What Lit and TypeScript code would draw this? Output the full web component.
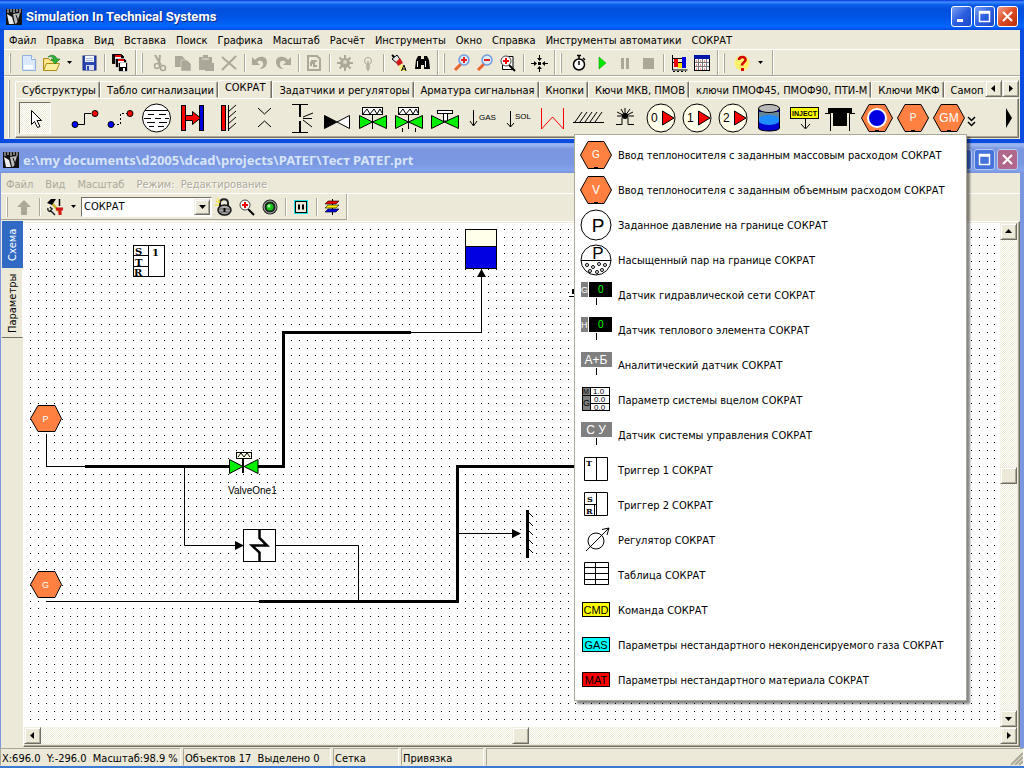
import { LitElement, html, svg, css, type SVGTemplateResult } from "lit";
import { customElement, state } from "lit/decorators.js";
import { classMap } from "lit/directives/class-map.js";

type Icon = SVGTemplateResult;

const draw = (icon: Icon, size: number) => html`
  <svg width=${size} height=${size} viewBox="0 0 ${size} ${size}" aria-hidden="true">${icon}</svg>
`;

/* ---------- 20px toolbar glyphs ---------- */
const floppy = svg`<rect x="4" y="3" width="13" height="14" fill="#2a48b8" stroke="#16277c"/><rect x="6" y="3" width="9" height="6" fill="#f4f7ff"/><path d="M7 5.500h7M7 7.500h7" stroke="#a8b4d8"/><rect x="7" y="12" width="8" height="5" fill="#d8dcec"/><rect x="8" y="13" width="2" height="4" fill="#2a48b8"/>`;
const lens = (x: number, y: number, mark: Icon) => svg`<path d="M${x - 3} ${y + 4}L3 17" stroke="#e8642c" stroke-width="3"/><circle cx=${x} cy=${y} r="5" fill="#dcecff" stroke="#6f9be0" stroke-width="1.500"/>${mark}`;
const redLens = svg`<path d="M11 12l6 6" stroke="#000" stroke-width="2"/><circle cx="8" cy="8" r="5" fill="#fff" stroke="#444"/><path d="M8 5v6M5 8h6" stroke="#e00" stroke-width="2"/>`;
const g = "#aca899";

const tb: Record<string, Icon> = {
  page: svg`<path d="M4.500 2.500h9l4 4v11h-13z" fill="#dbe9fb" stroke="#8fb0dc"/><path d="M13.500 2.500v4h4" fill="#fff" stroke="#8fb0dc"/><path d="M6 14h9" stroke="#f8fbff" stroke-width="4"/>`,
  open: svg`<path d="M2.500 17.500v-12h5l2 2h6v4" fill="#fbe48a" stroke="#b08a18"/><path d="M2.500 17.500l3-7h13l-3 7z" fill="#fff0a0" stroke="#b08a18"/><path d="M7 4c3-3 8-2 9 2h3l-5 5-4-5h3c-1-2-3-3-6-2z" fill="#2fae35" stroke="#187a20" stroke-width=".6"/>`,
  save: floppy,
  copies: svg`<path d="M2.500 1.500h9l2 2v7h-11z" fill="#000" stroke="#000"/><path d="M5 3h6v3H5z" fill="#fff"/><path d="M5 2h6v2H5z" fill="#e00"/><path d="M5.500 5.500h9l2 2v7h-11z" stroke="#fff" stroke-width=".6"/><path d="M8 7h6v3H8z" fill="#fff"/><path d="M8 6h6v2H8z" fill="#e00"/><path d="M8.500 9.500h9v9h-8l-1-1z" stroke="#fff" stroke-width=".6"/><path d="M10 10h6v4h-6zM13 15h2v3h-2z" fill="#fff"/>`,
  cut: svg`<path d="M5 2l6 10M10 2l-1 9" stroke=${g} stroke-width="2" fill="none"/><circle cx="7" cy="13" r="2.500" fill="none" stroke=${g} stroke-width="1.500"/><circle cx="13" cy="15" r="2.500" fill="none" stroke=${g} stroke-width="1.500"/>`,
  copy: svg`<path d="M2 3h7l3 3v8H2z" fill=${g}/><path d="M8 7h6l4 4v7H8z" fill=${g} stroke="#ece9d8" stroke-width=".5"/>`,
  paste: svg`<path d="M3 4h13v13H3zM7 2h5v3H7z" fill=${g}/><path d="M6 6h7" stroke="#ece9d8"/><path d="M9 10h9v8H9z" fill=${g}/>`,
  del: svg`<path d="M3 4l14 12M3 17L17 3" stroke=${g} stroke-width="2"/>`,
  undo: svg`<path d="M2 4v8h8l-3-3c4-3 7 0 6 3s-3 3-3 4c5 0 7-4 7-7 0-6-8-7-12-2z" fill=${g}/>`,
  redo: svg`<path d="M18 4v8h-8l3-3c-4-3-7 0-6 3s3 3 3 4c-5 0-7-4-7-7 0-6 8-7 12-2z" fill=${g}/>`,
  doc: svg`<path d="M4 3h9l3 3v11H4z" fill="none" stroke=${g} stroke-width="2"/><path d="M7 8h6M7 13v-3h3v3h3" stroke=${g} stroke-width="2" fill="none"/>`,
  gear: svg`<circle cx="10" cy="10" r="5" fill=${g}/><path d="M10 2v16M2 10h16M4.500 4.500l11 11M15.500 4.500l-11 11" stroke=${g} stroke-width="2"/><circle cx="10" cy="9" r="2" fill="#dcd8c8"/>`,
  bulb: svg`<circle cx="10" cy="8" r="3.500" fill="none" stroke=${g}/><path d="M10 8v4M8 13h4M8 15h4M9 17h2" stroke=${g} stroke-width="1.500"/>`,
  torch: svg`<path d="M3 2l5 5" stroke="#000" stroke-width="2"/><path d="M3 6l5-4 4 6-3 3z" fill="#e8e8e8" stroke="#000"/><path d="M7 9l4-4 3 5-5 3z" fill="#d01818"/><path d="M10 13l4-2 4 7h-7z" fill="#fff27a"/><path d="M12.500 18l2.500-6 2 6M13 16h4" fill="none" stroke="#000"/>`,
  binocular: svg`<path d="M4 7l2-4h3v3h3V3h3l2 4 1 9h-6v-4h-3v4H3z" fill="#000"/><path d="M5.500 8v6M13.500 8v6" stroke="#fff"/>`,
  zoomIn: lens(12, 7, svg`<path d="M12 4v6M9 7h6" stroke="#e02020" stroke-width="2"/>`),
  zoomOut: lens(12, 7, svg`<path d="M9 7h6" stroke="#e02020" stroke-width="2"/>`),
  zoomFit: svg`<path d="M8 3.500h7v13H4.500V12" fill="#fff" stroke="#000"/>${redLens}`,
  cross: svg`<path d="M10.500 2v4M10.500 14v5M2 10.500h4M14 10.500h5" stroke="#000"/><path d="M8 5h5l-2.500 3zM8 16h5l-2.500-3zM5 8v5l3-2.500zM16 8v5l-3-2.500z" fill="#000"/><rect x="9" y="9" width="3" height="3"/>`,
  watch: svg`<circle cx="10" cy="11.500" r="5.500" fill="#fff" stroke="#000" stroke-width="1.500"/><path d="M8 2.500h4M10 3v3M14 5l2 2M10 8v4" stroke="#000" stroke-width="1.500"/>`,
  play: svg`<path d="M7 4l7 6-7 6z" fill="#00e800" stroke="#009000" stroke-width=".5"/>`,
  pause: svg`<path d="M7.500 5v11M12.500 5v11" stroke=${g} stroke-width="3"/>`,
  stop: svg`<rect x="5" y="5" width="11" height="11" fill=${g}/>`,
  chart: svg`<path d="M3.500 2v15h15M4 5.500h13M4 9.500h13" stroke="#000" fill="none"/><rect x="5" y="6" width="4" height="8" fill="#e00"/><rect x="9" y="10" width="4" height="5" fill="#fd0"/><rect x="13" y="4" width="4" height="11" fill="#00d"/><path d="M4 18.500h13" stroke="#000" stroke-dasharray="2 2"/>`,
  calendar: svg`<rect x="2.500" y="3.500" width="15" height="14" fill="#fff" stroke="#000"/><rect x="2" y="2" width="16" height="4" fill="#0018a8"/><path d="M3 9.500h14M3 13.500h14M6.500 6v11M10.500 6v11M14.500 6v11" stroke="#777"/><path d="M4 8h12M4 12h12M4 16h12" stroke="#d22" stroke-dasharray="1 3"/>`,
  help: svg`<circle cx="10" cy="10" r="7.500" fill="#fff06a"/><path d="M7 7c0-4 7-4 6.500 0 0 2-3.500 3-3.500 5.500" fill="none" stroke="#d40000" stroke-width="2.500"/><rect x="9" y="15" width="3" height="3" fill="#d40000"/>`,
  up: svg`<path d="M10 3l7 7h-4v8H7v-8H3z" fill=${g}/>`,
  tools: svg`<path d="M6 5l10 12" stroke="#c8b020" stroke-width="2.500"/><path d="M2 6l4-4h5L7 8z" fill="#000"/><path d="M14.500 2v7" stroke="#000" stroke-width="1.500"/><path d="M11 12h7M15 12v6" stroke="#d01818" stroke-width="3"/><path d="M3 11c-1 3 2 4 3 3l4 4M5 10l2 2-2 2" fill="none" stroke="#222" stroke-width="1.500"/>`,
  lock: svg`<path d="M6 9V6c0-5 8-5 8 0v3" fill="none" stroke="#222" stroke-width="2"/><path d="M2 4l4 2M1 8h4M3 1l3 4" stroke="#f4e400"/><ellipse cx="10.500" cy="13" rx="6.500" ry="5" fill="#aaa" stroke="#111" stroke-width="1.500"/><path d="M5 12h11M5 15h11" stroke="#555"/><path d="M10.500 11v4" stroke="#000" stroke-width="2"/>`,
  zoomRed: redLens,
  target: svg`<circle cx="10" cy="10" r="7.500" fill="#222"/><circle cx="10" cy="10" r="6" fill="none" stroke="#b4c4b4"/><circle cx="10" cy="10" r="3.500" fill="#12c812"/><circle cx="9" cy="9" r="1.500" fill="#b6ffb6"/>`,
  pauseBox: svg`<rect x="3" y="3" width="14" height="14" fill="#20dfe0"/><rect x="4.500" y="4.500" width="11" height="11" fill="#ece9d8" stroke="#000"/><path d="M8 7.500v5M12 7.500v5" stroke="#000" stroke-width="2"/>`,
  layers: svg`<path d="M10.500 2v16" stroke="#000"/><path d="M6 4h11l-3 3H3z" fill="#e00" stroke="#000" stroke-width=".6"/><path d="M6 8h11l-3 3H3z" fill="#fe0" stroke="#000" stroke-width=".6"/><path d="M6 12h11l-3 3H3z" fill="#00d" stroke="#000" stroke-width=".6"/>`,
};

/* ---------- 32px palette glyphs ---------- */
const orange = "#ff8040";
const hexagon = (label: Icon) => svg`<path d="M.5 16L8 2.500h16L31.500 16 24 29.500H8z" fill=${orange} stroke="#000"/><rect x="14" y="28" width="4" height="2"/>${label}`;
const hexText = (t: string, size = 10) => hexagon(svg`<text class="hx" x="16" y=${size > 11 ? 20 : 19} font-size=${size}>${t}</text>`);
const valve = svg`<path d="M2.500 13.500v13L15.500 20zM29.500 13.500v13L15.500 20z" fill="#00f000" stroke="#000"/>`;
const actuator = svg`<rect x="5.500" y="5.500" width="20" height="7" fill="#fff" stroke="#000"/><path d="M6 12l4-5 3 5 4-5 3 5 3-5 2 4" fill="none" stroke="#000"/><path d="M15.500 12v15" stroke="#000"/>`;
const pump = (n: string) => svg`<circle cx="16" cy="16" r="14" fill="#ffffea" stroke="#000"/><path d="M17.500 9v14L29 16z" fill="#f00" stroke="#000"/><text x="6" y="20" font-size="12">${n}</text>`;
const downLabel = (t: string) => svg`<path d="M8.500 8v15M5 19l3.500 5 3.500-5" fill="none" stroke="#000"/><text x="14" y="18" font-size="8">${t}</text>`;

const pal: Array<[string, Icon]> = [
  ["Связь", svg`<path d="M8 22.500h7.500v-11H22" fill="none" stroke="#000"/><circle cx="6" cy="22.500" r="3" fill="#00f" stroke="#000"/><circle cx="26" cy="11.500" r="3" fill="#f00" stroke="#000"/>`],
  ["Пунктирная связь", svg`<path d="M8 22.500h7.500v-11H22" fill="none" stroke="#000" stroke-dasharray="2 2"/><circle cx="6" cy="22.500" r="3" fill="#00f" stroke="#000"/><circle cx="25" cy="11.500" r="3" fill="#f00" stroke="#000"/>`],
  ["Камера", svg`<circle cx="15.500" cy="16" r="14" fill="#fff" stroke="#000"/><path d="M4 8.500h23M7 12.500h6M18 12.500h7M3 16.500h7M14 16.500h6M24 16.500h4M6 20.500h8M18 20.500h8M8 24.500h5M17 24.500h6" stroke="#000"/>`],
  ["Теплообмен", svg`<rect x="4.500" y="3.500" width="4" height="25" fill="#f00" stroke="#000"/><rect x="22.500" y="3.500" width="4" height="25" fill="#00d" stroke="#000"/><path d="M8.500 13.500h7v-4l8 6.500-8 6.500v-4h-7z" fill="#f00" stroke="#000"/>`],
  ["Стенка", svg`<rect x="8.500" y="3.500" width="4" height="25" fill="#f00" stroke="#000"/><path d="M15.500 3v26M15 10l8-7M15 16l8-7M15 22l8-7M15 28l8-7" fill="none" stroke="#000"/>`],
  ["Сужение", svg`<path d="M9 6l6.500 6L22 6M9 25l6.500-6 6.500 6" fill="none" stroke="#000"/>`],
  ["Истечение", svg`<path d="M7 2.500h16M7 30.500h16M15.500 2v13M15.500 19v12" fill="none" stroke="#000"/><path d="M14.500 3v12M14.500 19v12" stroke="#000"/><path d="M18 15l10-4M18 16.500h9M18 18l9 7" stroke="#000"/>`],
  ["Обратный клапан", svg`<path d="M3.500 13.500v13L16 20z" stroke="#000"/><path d="M28.500 13.500v13L16 20z" fill="#fff" stroke="#000"/>`],
  ["Задвижка", svg`${valve}${actuator}`],
  ["Регулирующий клапан", svg`${valve}${actuator}<path d="M9.500 26v4M22.500 26v4" stroke="#000"/>`],
  ["Клапан", svg`${valve}<rect x="8.500" y="8.500" width="15" height="3" fill="#fff" stroke="#000"/><path d="M14.500 12v7h4v-7" fill="#fff" stroke="#000"/>`],
  ["Подвод газа", downLabel("GAS")],
  ["Подвод раствора", svg`<path d="M9.500 9v16M6 21l3.500 4 3.500-4" fill="none" stroke="#000"/><text x="14" y="17" font-size="8">SOL</text>`],
  ["Пружина", svg`<path d="M4.500 6v21l11-12 11 12V6" fill="none" stroke="#f00"/>`],
  ["Опора", svg`<path d="M0 20.500h31M2 20l7-10M7 20l7-10M12 20l7-10M17 20l7-10M22 20l7-10" stroke="#000"/>`],
  ["Разрыв", svg`<path d="M7 22.500h6v-7M25 22.500h-6v-7M16 14L8 10M16 14l-4-7M16 14V6M16 14l5-7M16 14l8-4M16 14h9M16 14H8" fill="none" stroke="#000"/><circle cx="16" cy="14" r="3"/>`],
  ["Насос 0", pump("0")],
  ["Насос 1", pump("1")],
  ["Насос 2", pump("2")],
  ["Бак", svg`<path d="M5.500 6v20c0 4 21 4 21 0V6" fill="#0000d0" stroke="#000"/><path d="M6 10h20v8H6z" fill="#66879a"/><path d="M6 16c4-4 16-4 20 0v4c-4 4-16 4-20 0z" fill="#1e8cff"/><ellipse cx="16" cy="6.500" rx="10.500" ry="4" fill="#b8b8b8" stroke="#000"/>`],
  ["Инжекция", svg`<rect x="1.500" y="5.500" width="28" height="11" fill="#ff0" stroke="#000"/><text x="15.500" y="14" text-anchor="middle" font-size="7" font-weight="700">INJECT</text><path d="M16.500 17v9M12 22l4.500 5 4.500-5" fill="none" stroke="#000"/>`],
  ["Крышка", svg`<path d="M3 6h24v5H3zM8 11h14v13H8z"/><path d="M0 11.500h5.500V29M30 11.500h-5.500V29" fill="none" stroke="#000"/>`],
  ["Реактор", hexagon(svg`<circle cx="16" cy="16" r="9" fill="#0000e0" stroke="#fff" stroke-width="2"/>`)],
  ["Давление", hexText("P")],
  ["Расход смеси", hexText("GM", 12)],
];

const sensor = (a: string) => svg`<rect x="1" y="3" width="7" height="15" fill="#808080"/><rect x="9" y="3" width="23" height="15"/><text x="1" y="14" font-size="9" fill="#fff">${a}</text><text x="18" y="14" font-size="10" fill="#0f0">0</text><path d="M16.500 19v7" stroke="#000"/>`;
const greyTag = (t: string) => svg`<rect x="1" y="3" width="31" height="15" fill="#808080"/><text x="16" y="15" text-anchor="middle" font-size="12" fill="#fff">${t}</text><path d="M16.500 19v7" stroke="#000"/>`;
const tag = (t: string, color: string) => svg`<rect x="2.500" y="8.500" width="27" height="14" fill=${color} stroke="#000"/><text x="16" y="20" text-anchor="middle" font-size="11">${t}</text>`;

const popup: Array<[Icon, string]> = [
  [hexText("G"), "Ввод теплоносителя с заданным массовым расходом СОКРАТ"],
  [hexText("V", 12), "Ввод теплоносителя с заданным объемным расходом СОКРАТ"],
  [svg`<circle cx="16" cy="16" r="15" fill="#fff" stroke="#000"/><text x="18" y="23" text-anchor="middle" font-size="19">P</text>`, "Заданное давление на границе СОКРАТ"],
  [svg`<circle cx="16" cy="16" r="15" fill="#fff" stroke="#000"/><path d="M1 16.500h30" stroke="#000"/><text x="18" y="15" text-anchor="middle" font-size="17">P</text><g fill="none" stroke="#000"><circle cx="7" cy="21" r="1.500"/><circle cx="13" cy="23" r="1.500"/><circle cx="19" cy="20" r="1.500"/><circle cx="25" cy="21" r="1.500"/><circle cx="10" cy="27" r="1.500"/><circle cx="17" cy="28" r="1.500"/><circle cx="22" cy="26" r="1.500"/></g>`, "Насыщенный пар на границе СОКРАТ"],
  [sensor("G"), "Датчик гидравлической сети СОКРАТ"],
  [sensor("H"), "Датчик теплового элемента СОКРАТ"],
  [greyTag("А+Б"), "Аналитический датчик СОКРАТ"],
  [svg`<rect x="2.500" y="3.500" width="27" height="23" fill="#fff" stroke="#000"/><path d="M3 4h7v22H3z" fill="#808080"/><path d="M10.500 4v22M3 11.500h26M11 19.500h18" stroke="#000"/><text x="3" y="10" font-size="7">М</text><text x="3" y="22" font-size="9">G</text><text x="13" y="10" font-size="8">1.0</text><text x="14" y="18" font-size="8">0.0</text><text x="14" y="26" font-size="8">0.0</text>`, "Параметр системы вцелом СОКРАТ"],
  [greyTag("С У"), "Датчик системы управления СОКРАТ"],
  [svg`<path d="M4.500 3.500h23v23h-23zM16.500 3v24" fill="#fff" stroke="#000"/><text class="serif" x="6" y="12" font-size="8">T</text>`, "Триггер 1 СОКРАТ"],
  [svg`<path d="M4.500 3.500h23v23h-23zM16.500 3v24M4 15.500h12M14.500 15v12" fill="#fff" stroke="#000"/><text class="serif" x="7" y="13" font-size="8">S</text><text class="serif" x="6" y="25" font-size="8">R</text>`, "Триггер 2 СОКРАТ"],
  [svg`<circle cx="16" cy="17" r="8" fill="none" stroke="#000"/><path d="M6 27L29 4M22 5.500l7-1.500-2 7" fill="none" stroke="#000"/>`, "Регулятор СОКРАТ"],
  [svg`<path d="M4.500 3.500h24v22h-24zM15.500 3v22M4 8.500h24M4 14.500h24M4 20.500h24" fill="none" stroke="#000"/>`, "Таблица СОКРАТ"],
  [tag("CMD", "#ff0"), "Команда СОКРАТ"],
  [tag("GAS", "#0ff"), "Параметры нестандартного неконденсируемого газа СОКРАТ"],
  [tag("MAT", "#f00"), "Параметры нестандартного материала СОКРАТ"],
];

const appIcon = svg`<rect width="16" height="16" fill="#111"/><path d="M2 0v4M5 0v3M8 0v4M11 0v3M14 0v4" stroke="#ddd"/><path d="M1 5l5 3 2 7H3z" fill="#eee"/><path d="M7 5l7-1-3 10-2 1z" fill="#bbb"/><path d="M10 6l3 8" stroke="#111"/>`;

type Tool = string | "|" | "v";
const bands: Tool[][] = [
  ["page", "open", "v", "save", "|", "copies"],
  ["cut", "copy", "paste", "del", "|", "undo", "redo", "|", "doc", "|", "gear", "bulb", "|", "torch", "binocular"],
  ["zoomIn", "zoomOut", "zoomFit", "|", "cross"],
  ["watch", "play", "pause", "stop", "|", "chart", "calendar"],
  ["help", "v"],
];

const mainMenu = ["Файл", "Правка", "Вид", "Вставка", "Поиск", "Графика", "Масштаб", "Расчёт", "Инструменты", "Окно", "Справка", "Инструменты автоматики", "СОКРАТ"];
const tabNames = ["Субструктуры", "Табло сигнализации", "СОКРАТ", "Задатчики и регуляторы", "Арматура сигнальная", "Кнопки", "Кючи МКВ, ПМОВ", "ключи ПМОФ45, ПМОФ90, ПТИ-М", "Ключи МКФ", "Самоп"];

/* Grid pitch of the drawing sheet at 98.9 % zoom. */
const PITCH = 7.905;
const rowDots = Array.from({ length: 260 }, (_, i) => `M${30 + Math.round(i * PITCH)} 0.5h1`).join("");

const base = css`
  * { box-sizing: border-box; }
  button, select { font: inherit; color: inherit; margin: 0; padding: 0; border: 0; background: none; border-radius: 0; }
  button { display: inline-flex; align-items: center; justify-content: center; }
  svg { display: block; flex: none; }
  svg text { font-family: "Liberation Sans", sans-serif; }
  svg text.serif { font-family: "DejaVu Serif", serif; font-weight: 700; }
  svg text.hx { fill: #fff; text-anchor: middle; }
  .raised { background: #ece9d8; border: 1px solid; border-color: #f1efe2 #716f64 #716f64 #f1efe2; box-shadow: inset 1px 1px #fff, inset -1px -1px #aca899; }
`;

@customElement("tool-strip")
class ToolStrip extends LitElement {
  static properties = { items: { attribute: false } };
  declare items: Tool[];
  static styles = [base, css`
    :host { display: flex; align-items: center; }
    .tool { width: 23px; height: 22px; }
    .drop { width: 15px; height: 22px; }
    .sep { width: 8px; height: 18px; background: linear-gradient(90deg, transparent 4px, #aca899 4px, #aca899 5px, #fff 5px, #fff 6px, transparent 6px); }
  `];
  render() {
    return this.items.map((t) =>
      t === "|" ? html`<span class="sep"></span>`
        : t === "v" ? html`<button class="drop" aria-label="Ещё"><svg width="5" height="3" viewBox="0 0 5 3"><path d="M0 0h5L2.500 3z"/></svg></button>`
        : html`<button class="tool" aria-label=${t}>${draw(tb[t], 20)}</button>`);
  }
}

@customElement("title-bar")
class TitleBar extends LitElement {
  static properties = { caption: {}, inactive: { type: Boolean } };
  declare caption: string;
  declare inactive: boolean;
  static styles = [base, css`
    :host { display: block; }
    .bar { display: flex; align-items: center; height: 30px; padding: 3px 6px 0 6px; gap: 4px; color: #fff; font: 700 13px/20px Roboto, "Noto Sans", sans-serif; text-shadow: 1px 1px #0a2a88;
      background: linear-gradient(#0831d9 0, #3c8cff 2px, #0a5ce8 5px, #0050dc 9px, #0055e6 18px, #0066ff 26px, #005bff 28px, #0048d8 30px); }
    .inactive { padding-left: 3px; color: #d8e4f8; text-shadow: none; font-family: "Noto Sans", sans-serif; background: linear-gradient(#8aa8ec 0, #9db9f0 2px, #7a96df 6px, #7a97e2 20px, #82a4ec 27px, #7a94dc 30px); }
    .caption { flex: 1; white-space: nowrap; overflow: hidden; margin: 0; font: inherit; }
    .controls { display: flex; gap: 2px; }
    .ctl { width: 21px; height: 21px; border: 1px solid #fff; border-radius: 3px; background: linear-gradient(135deg, #7aa0f4, #2b5fe0 50%, #1d48c8); }
    .close { background: linear-gradient(135deg, #f0a088, #dc4a24 50%, #b8300c); }
    .inactive .ctl { border-color: #b8caf4; background: #4672dc; }
    .inactive .close { background: #b0688c; }
  `];
  render() {
    return html`<div class=${classMap({ bar: true, inactive: this.inactive })}>
      ${draw(appIcon, 16)}
      <h1 class="caption">${this.caption}</h1>
      <div class="controls">
        <button class="ctl" aria-label="Свернуть"><svg width="15" height="15"><path d="M3 11.500h6" stroke="#fff" stroke-width="3"/></svg></button>
        <button class="ctl" aria-label="Развернуть"><svg width="15" height="15"><path d="M2.500 2.500h10v10h-10zM2 4h11" fill="none" stroke="#fff" stroke-width="1.500"/></svg></button>
        <button class="ctl close" aria-label="Закрыть"><svg width="15" height="15"><path d="M3 3l9 9M12 3l-9 9" stroke="#fff" stroke-width="2"/></svg></button>
      </div>
    </div>`;
  }
}

@customElement("scheme-sheet")
class SchemeSheet extends LitElement {
  static styles = [base, css`
    :host { display: block; min-width: 0; min-height: 0; overflow: hidden; background: #fff; }
    .sheet { width: 100%; height: 100%; }
    .thin { fill: none; stroke: #000; stroke-width: 1; }
    .thick { fill: none; stroke: #000; stroke-width: 3; }
  `];
  render() {
    const hexAt = (y: number, t: string) => svg`<path d="M30.500 ${y + 0.5}L38 ${y - 12.5}H55L61.500 ${y + 0.5}L55 ${y + 13.5}H38Z" fill=${orange} stroke="#000"/><text class="hx" x="45.500" y=${y + 4} font-size="9">${t}</text>`;
    return html`<svg class="sheet" role="img" aria-label="Схема">
      <defs><path id="dots" d=${rowDots} stroke="#000" shape-rendering="crispEdges"/></defs>
      <g transform="translate(-24 -223)">
        ${Array.from({ length: 140 }, (_, j) => svg`<use href="#dots" y=${229 + Math.round(j * PITCH)}/>`)}
        <rect x="133.500" y="245.500" width="31" height="31" fill="#fff" stroke="#000"/>
        <path class="thin" d="M148.500 245v31M133 255.500h15M133 266.500h15"/>
        <text class="serif" x="135" y="255" font-size="10">S</text>
        <text class="serif" x="135" y="266" font-size="10">T</text>
        <text class="serif" x="134" y="276" font-size="10">R</text>
        <text class="serif" x="152" y="256" font-size="10">1</text>
        <rect x="465.500" y="229.500" width="31" height="17" fill="#ffffea" stroke="#000"/>
        <rect x="465.500" y="246.500" width="31" height="22" fill="#0000e0" stroke="#000"/>
        <path d="M481.500 269l4.500 8h-9z"/>
        <path class="thin" d="M481.500 276v56.500H410M46.500 434v32.500H86M184.500 466v79.500H236M275 545.500h83.500V601M46 601.500h214M458 533.500h55"/>
        <path class="thick" d="M411 332.500H283.500v134H258M85 466.500h145M259 601.500h198.500v-135H700"/>
        ${hexAt(418, "P")}${hexAt(584, "G")}
        <path d="M229.500 459.500v14L243 466.500zM258 459.500v14L244 466.500z" fill="#00f000" stroke="#000"/>
        <path d="M243 459v14" stroke="#000" stroke-width="2"/>
        <rect x="236.500" y="452.500" width="15" height="6" fill="#ffffea" stroke="#000"/>
        <path class="thin" d="M238 457l3-4 3 4 3-4 3 4"/>
        <rect x="228" y="486" width="46" height="9" fill="#fff"/>
        <text x="228" y="494" font-size="10">ValveOne1</text>
        <rect x="243.500" y="529.500" width="32" height="32" fill="#fff" stroke="#000"/>
        <path d="M259.500 529v9l7.500 7.500h-15l7.500 7V562" fill="none" stroke="#000" stroke-width="2.500"/>
        <path d="M235 541v9l9-4.500zM512 529v9l9-4.500z"/>
        <path d="M527.500 510v48" stroke="#000" stroke-width="3"/>
        <path class="thin" d="M529 513l4 4M529 522l4 4M529 531l4 4M529 540l4 4M529 549l4 4"/>
        <path d="M572 289h4v5h-4zM569 296h6v1h-6z"/>
      </g>
    </svg>`;
  }
}

@customElement("app-root")
class AppRoot extends LitElement {
  @state() private tab = 2;
  static styles = [base, css`
    :host { display: flex; flex-direction: column; height: 100vh; overflow: hidden; position: relative; background: #ece9d8; color: #000; font: 11px/13px "DejaVu Sans Condensed", "DejaVu Sans", sans-serif; }
    .shell { flex: none; }
    .shell-body { border: solid #0a4ce0; border-width: 0 4px 4px; background: #ece9d8; }
    .menu { display: flex; align-items: center; height: 20px; padding: 2px 0 0 5px; gap: 10px; white-space: nowrap; border-bottom: 1px solid #fff; }
    .bands { display: flex; height: 26px; border-bottom: 1px solid #aca899; }
    .band { display: flex; align-items: center; padding: 0 4px 0 12px; border-right: 1px solid #aca899; box-shadow: 1px 0 #fff;
      background: linear-gradient(90deg, #fff 1px, #aca899 1px) 5px 50% / 2px 20px no-repeat; }
    .palette { display: flex; height: 63px; padding: 3px 1px 1px 0; border-top: 1px solid #fff; }
    .grip { flex: none; width: 11px; background: linear-gradient(90deg, #fff 1px, #aca899 1px) 4px 50% / 2px 100% no-repeat; }
    .pages { flex: 1; min-width: 0; display: flex; flex-direction: column; }
    .tabrow { display: flex; height: 18px; }
    .tabs { display: flex; flex: 1; align-items: flex-end; min-width: 0; overflow: hidden; white-space: nowrap; }
    .tab { flex: none; height: 17px; padding: 1px 3px 0 6px; border: 1px solid; border-color: #fff #716f64 transparent #fff; border-radius: 2px 2px 0 0; box-shadow: inset -1px 0 #aca899; }
    .tab.on { height: 19px; padding: 0 6px 4px; position: relative; margin-bottom: -1px; background: #ece9d8; }
    .page-nav { display: flex; }
    .page-nav .raised { width: 17px; height: 17px; }
    .sheet-row { display: flex; align-items: center; height: 41px; padding-left: 3px; border: 1px solid; border-color: #fff #716f64 #716f64 #fff; box-shadow: inset -1px -1px #aca899; }
    .pick { flex: none; width: 32px; height: 32px; margin-right: 16px; border: 1px solid; border-color: #716f64 #fff #fff #716f64; background: repeating-conic-gradient(#ece9d8 0 25%, #fff 0 50%) 0 0 / 2px 2px; }
    .cell { flex: none; width: 36px; height: 36px; }
    .cells { display: flex; overflow: hidden; flex: none; }
    .more { padding-top: 8px; }
    .next { margin-left: auto; margin-right: 6px; }

    .doc { flex: 1; min-height: 0; display: flex; flex-direction: column; }
    .doc-body { flex: 1; min-height: 0; display: flex; flex-direction: column; border: solid #7a96df; border-width: 0 4px 0 1px; }
    .doc .menu { height: 21px; padding-left: 5px; gap: 12px; color: #aca899; text-shadow: 1px 1px #fff; }
    .mode { display: flex; gap: 6px; }
    .doc-tools { display: flex; height: 26px; }
    .doc-tools .band { padding: 0 3px 0 11px; border-bottom: 1px solid #aca899; }
    .combo { display: grid; width: 131px; height: 20px; align-items: center; border: 1px solid; border-color: #716f64 #fff #fff #716f64; background: #fff; }
    .combo select { grid-area: 1 / 1; width: 100%; height: 18px; padding-left: 2px; appearance: none; outline: 0; }
    .combo .raised { grid-area: 1 / 1; justify-self: end; width: 16px; height: 16px; margin-right: 1px; display: grid; place-items: center; pointer-events: none; }
    .work { flex: 1; min-height: 0; display: grid; grid-template-columns: 21px 1fr; padding: 1px 0 1px 1px; }
    .side { display: flex; flex-direction: column; gap: 2px; }
    .side button { writing-mode: vertical-rl; transform: rotate(180deg); width: 21px; white-space: nowrap; }
    .side .on { height: 47px; background: #316ac5; color: #fff; }
    .side .off { height: 68px; border: solid; border-width: 1px 0 0 1px; border-color: #716f64 #fff #fff #fff; }
    .view { display: grid; grid-template: 1fr 17px / 1fr 17px; min-width: 0; min-height: 0; border: 1px solid; border-color: #fff #716f64 #716f64 #fff; padding: 1px 2px 2px 0; box-shadow: inset -1px -1px #aca899; }
    .track { display: flex; background: repeating-conic-gradient(#ece9d8 0 25%, #fff 0 50%) 0 0 / 2px 2px; }
    .track button { flex: none; width: 17px; height: 17px; }
    .v { flex-direction: column; grid-row: 1; grid-column: 2; }
    .h { grid-row: 2; grid-column: 1 / 3; }
    .thumb { flex: none; width: 17px; height: 17px; }
    .before, .after { flex: 1; }
    .status { display: flex; gap: 2px; height: 20px; border-bottom: 2px solid #3a7ad0; }
    .panel { flex: none; padding: 3px 0 0 1px; white-space: pre; border: 1px solid; border-color: #aca899 #fff transparent #aca899; }
    .pos { width: 181px; }
    .objects { width: 148px; }
    .grid-mode { width: 66px; }
    .snap { width: 83px; }
    .rest { flex: 1; display: flex; justify-content: flex-end; align-items: flex-end; padding: 0; }

    .popup { position: absolute; left: 574px; top: 134px; width: 393px; margin: 0; padding: 2px 5px 3px; list-style: none; background: #fff; border: 1px solid #aca899; box-shadow: 3px 3px 2px #0007; }
    .popup button { display: flex; justify-content: flex-start; gap: 6px; width: 100%; height: 35px; white-space: nowrap; }
    .popup span { padding-top: 2px; }
  `];

  private arrow(d: string) {
    return html`<svg width="9" height="9" viewBox="0 0 9 9" aria-hidden="true"><path d=${d}/></svg>`;
  }

  render() {
    const left = "M6 1v7L2 4.500z", right = "M3 1v7l4-3.500z", up = "M1 6h7L4.500 2z", down = "M1 3h7L4.500 7z";
    return html`
      <section class="shell">
        <title-bar caption="Simulation In Technical Systems"></title-bar>
        <div class="shell-body">
          <nav class="menu">${mainMenu.map((m) => html`<button>${m}</button>`)}</nav>
          <div class="bands">${bands.map((b) => html`<div class="band"><tool-strip .items=${b}></tool-strip></div>`)}</div>
          <div class="palette">
            <span class="grip"></span>
            <div class="pages">
              <div class="tabrow">
                <div class="tabs" role="tablist">${tabNames.map((t, i) => html`<button role="tab" class=${classMap({ tab: true, on: i === this.tab })} @click=${() => (this.tab = i)}>${t}</button>`)}</div>
                <div class="page-nav">
                  <button class="raised" aria-label="Назад">${this.arrow(left)}</button>
                  <button class="raised" aria-label="Вперёд">${this.arrow(right)}</button>
                </div>
              </div>
              <div class="sheet-row">
                <button class="pick" aria-label="Выбор"><svg width="30" height="30"><path d="M11.500 7.500v14l3-3 3 6 2.500-1-3-6h4.500z" fill="#fff" stroke="#000"/></svg></button>
                <div class="cells">${pal.map(([n, i]) => html`<button class="cell" aria-label=${n}>${draw(i, 32)}</button>`)}</div>
                <button class="more" aria-label="Все элементы"><svg width="9" height="12"><path d="M1 1l3.500 3.500L8 1M1 6l3.500 3.500L8 6" fill="none" stroke="#000" stroke-width="1.500"/></svg></button>
                <button class="next" aria-label="Далее"><svg width="6" height="20"><path d="M0 0l6 10-6 10z"/></svg></button>
              </div>
            </div>
          </div>
        </div>
      </section>

      <section class="doc">
        <title-bar inactive caption="e:\\my documents\\d2005\\dcad\\projects\\РАТЕГ\\Тест РАТЕГ.prt"></title-bar>
        <div class="doc-body">
          <nav class="menu">
            <button>Файл</button><button>Вид</button><button>Масштаб</button>
            <span class="mode"><span>Режим:</span><span>Редактирование</span></span>
          </nav>
          <div class="doc-tools"><div class="band">
            <tool-strip .items=${["up", "|", "tools", "v"]}></tool-strip>
            <label class="combo">
              <select aria-label="Слой"><option>СОКРАТ</option></select>
              <span class="raised">${this.arrow(down)}</span>
            </label>
            <tool-strip .items=${["lock", "zoomRed", "target", "|", "pauseBox", "|", "layers"]}></tool-strip>
          </div></div>
          <div class="work">
            <div class="side"><button class="on">Схема</button><button class="off">Параметры</button></div>
            <div class="view">
              <scheme-sheet></scheme-sheet>
              <div class="track v">
                <button class="raised" aria-label="Вверх">${this.arrow(up)}</button><span class="before"></span>
                <span class="thumb raised"></span><span class="after"></span>
                <button class="raised" aria-label="Вниз">${this.arrow(down)}</button>
              </div>
              <div class="track h">
                <button class="raised" aria-label="Влево">${this.arrow(left)}</button><span class="before"></span>
                <span class="thumb raised"></span><span class="after"></span>
                <button class="raised" aria-label="Вправо">${this.arrow(right)}</button>
              </div>
            </div>
          </div>
        </div>
        <footer class="status">
          <span class="panel pos">X:696.0  Y:-296.0  Масштаб:98.9 %</span>
          <span class="panel objects">Объектов 17  Выделено 0</span>
          <span class="panel grid-mode">Сетка</span>
          <span class="panel snap">Привязка</span>
          <span class="panel rest"><svg width="14" height="14"><path d="M2 14L14 2M6 14l8-8M10 14l4-4" stroke="#aca899" stroke-width="2"/></svg></span>
        </footer>
      </section>

      <ul class="popup">${popup.map(([i, t]) => html`<li><button>${draw(i, 32)}<span>${t}</span></button></li>`)}</ul>
    `;
  }
}
